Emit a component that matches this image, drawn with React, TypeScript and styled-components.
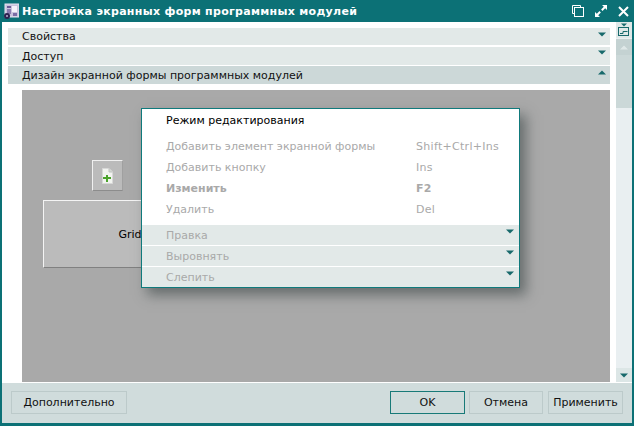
import React from 'react';
import styled, { createGlobalStyle } from 'styled-components';

const GlobalStyle = createGlobalStyle`
  html, body {
    margin: 0;
    padding: 0;
    background: #ffffff;
  }
  body {
    font-family: "DejaVu Sans", Verdana, sans-serif;
    font-size: 11px;
  }
`;

const Dialog = styled.div`
  width: 634px;
  height: 426px;
  box-sizing: border-box;
  display: flex;
  flex-direction: column;
  overflow: hidden;
  background: #ffffff;
  border-left: 2px solid #0c7176;
  border-right: 2px solid #0c7176;
  border-bottom: 3px solid #0c7176;
`;

const TitleBar = styled.div`
  height: 22px;
  flex: none;
  margin: 0 -2px;
  padding: 0 4px 0 3px;
  display: flex;
  align-items: center;
  background: #0c7176;
  color: #ffffff;
`;

const TitleText = styled.div`
  flex: 1;
  margin-left: 3px;
  font-weight: bold;
  font-size: 11px;
  letter-spacing: 0.3px;
  white-space: nowrap;
`;

const WindowIcons = styled.div`
  display: flex;
  align-items: center;
  gap: 11px;
  margin-right: 1px;
`;

const Main = styled.div`
  flex: 1;
  min-height: 0;
  display: flex;
`;

const Content = styled.div`
  flex: 1;
  min-width: 0;
  display: flex;
  flex-direction: column;
  padding: 6px 0 0 6px;
`;

const SectionRow = styled.div<{ $open?: boolean; $height: number; $gap: number }>`
  height: ${(p) => p.$height}px;
  flex: none;
  margin-bottom: ${(p) => p.$gap}px;
  padding: 0 4px 0 14px;
  display: flex;
  align-items: center;
  justify-content: space-between;
  background: ${(p) => (p.$open ? '#ccd8d8' : '#e2e9e8')};
  color: #111111;
`;

const Canvas = styled.div`
  position: relative;
  flex: 1;
  margin: 6px 0 0 14px;
  background: #a9a9a9;
  display: flex;
  flex-direction: column;
  align-items: flex-start;
  padding: 70px 0 0 21px;
`;

const AddButton = styled.div`
  width: 29px;
  height: 29px;
  margin-left: 49px;
  display: flex;
  align-items: center;
  justify-content: center;
  background: #bbbbbb;
  border-top: 1px solid #f0f0f0;
  border-left: 1px solid #f0f0f0;
  border-bottom: 1px solid #8c8c8c;
  border-right: 1px solid #a0a0a0;
`;

const GridBox = styled.div`
  width: 172px;
  height: 66px;
  margin-top: 9px;
  display: flex;
  align-items: center;
  justify-content: center;
  background: #bbbbbb;
  border-top: 1px solid #f4f4f4;
  border-left: 1px solid #f4f4f4;
  border-bottom: 1px solid #808080;
  color: #000000;
`;

const Popup = styled.div`
  position: absolute;
  left: 119px;
  top: 18px;
  width: 377px;
  height: 178px;
  display: flex;
  flex-direction: column;
  background: #ffffff;
  border: 1px solid #0f7a7c;
  box-shadow: 6px 7px 12px rgba(50, 60, 60, 0.55);
`;

const ModeItem = styled.div`
  height: 16px;
  margin-top: 3px;
  padding-left: 24px;
  display: flex;
  align-items: center;
  color: #000000;
`;

const MenuList = styled.div`
  flex: 1;
  display: flex;
  flex-direction: column;
  padding-top: 8px;
`;

const MenuItem = styled.div<{ $bold?: boolean }>`
  height: 21px;
  flex: none;
  padding-left: 24px;
  display: grid;
  grid-template-columns: 250px 1fr;
  align-items: center;
  color: #a9a9a9;
  font-weight: ${(p) => (p.$bold ? 'bold' : 'normal')};
`;

const Shortcut = styled.span`
  letter-spacing: 0.3px;
`;

const PopupSection = styled.div`
  height: 20px;
  flex: none;
  margin-top: 1px;
  padding: 0 5px 0 24px;
  display: flex;
  align-items: center;
  justify-content: space-between;
  background: #e2e9e8;
  color: #a9a9a9;
`;

const ArrowBox = styled.span<{ $lift: number }>`
  display: flex;
  margin-bottom: ${(p) => p.$lift}px;
`;

const Scrollbar = styled.div`
  width: 16px;
  flex: none;
  margin-left: 6px;
  display: flex;
  flex-direction: column;
  background: #e9eff1;
`;

const ScrollTop = styled.div`
  height: 16px;
  margin-bottom: 1px;
  display: flex;
  align-items: center;
  justify-content: center;
  background: #dfe8e8;
`;

const ScrollUp = styled.div`
  height: 16px;
  display: flex;
  align-items: center;
  justify-content: center;
  background: #c4d2d2;
`;

const ScrollThumb = styled.div`
  height: 53px;
  background: #cbd8d8;
`;

const ScrollTrack = styled.div`
  flex: 1;
`;

const ScrollDown = styled.div`
  height: 14px;
  display: flex;
  align-items: center;
  justify-content: center;
  background: #dce6e6;
`;

const Footer = styled.div`
  height: 41px;
  flex: none;
  box-sizing: border-box;
  border-top: 1px solid #ffffff;
  padding: 8px 9px 0 9px;
  display: flex;
  align-items: flex-start;
  background: #d0dcdc;
`;

const FooterButton = styled.div<{ $primary?: boolean; $width: number; $left?: number }>`
  width: ${(p) => p.$width}px;
  height: 23px;
  box-sizing: border-box;
  margin-left: ${(p) => p.$left ?? 0}px;
  display: flex;
  align-items: center;
  justify-content: center;
  border: 1px solid ${(p) => (p.$primary ? '#187a78' : '#bccaca')};
  color: #111111;
`;

const Spacer = styled.div`
  flex: 1;
`;

const Arrow = ({ up, color = '#17696b', lift = 0 }: { up?: boolean; color?: string; lift?: number }) => (
  <ArrowBox $lift={lift}>
    <svg width="8" height="5" viewBox="0 0 8 5">
      <path d={up ? 'M4 0.5 L8 4.5 H0 Z' : 'M0 0.5 H8 L4 4.5 Z'} fill={color} />
    </svg>
  </ArrowBox>
);

const AppIcon = () => (
  <svg width="16" height="17" viewBox="0 0 16 17">
    <rect x="2" y="1" width="14" height="13" fill="#c9c3dc" stroke="#e8e4f2" />
    <rect x="4" y="3" width="4" height="2" fill="#6a5a94" />
    <rect x="9" y="3" width="5" height="6" fill="#f4f2fa" />
    <rect x="4" y="6" width="4" height="5" fill="#8a7cb0" />
    <rect x="10" y="10" width="4" height="3" fill="#7a6ca4" />
    <circle cx="4" cy="13" r="3" fill="#2d2350" />
    <circle cx="4" cy="13" r="1" fill="#b8b0d0" />
  </svg>
);

const RestoreIcon = () => (
  <svg width="12" height="12" viewBox="0 0 12 12" fill="none" stroke="#ffffff">
    <path d="M8.5 2.5 V0.5 H0.5 V8.5 H2.5" strokeWidth="1" />
    <rect x="2.5" y="2.5" width="9" height="9" strokeWidth="1" />
  </svg>
);

const MaximizeIcon = () => (
  <svg width="12" height="12" viewBox="0 0 12 12">
    <path d="M7 0 H12 V5 L10.2 3.2 L7.5 5.9 L6.1 4.5 L8.8 1.8 Z" fill="#ffffff" />
    <path d="M5 12 H0 V7 L1.8 8.8 L4.5 6.1 L5.9 7.5 L3.2 10.2 Z" fill="#ffffff" />
  </svg>
);

const CloseIcon = () => (
  <svg width="11" height="11" viewBox="0 0 11 11">
    <path d="M1 1 L10 10 M10 1 L1 10" stroke="#ffffff" strokeWidth="2" />
  </svg>
);

const ChartIcon = () => (
  <svg width="12" height="14" viewBox="0 0 12 14">
    <path d="M3 0.5 H9 L6 3.5 Z" fill="#17696b" />
    <rect x="0.5" y="4.5" width="10" height="8" fill="none" stroke="#17696b" />
    <path d="M2 10.5 H5 V8.5 H9.5" fill="none" stroke="#17696b" />
  </svg>
);

const AddDocIcon = () => (
  <svg width="11" height="16" viewBox="0 0 11 16">
    <path d="M0.5 0.5 H7 L10.5 4 V15.5 H0.5 Z" fill="#f2f4f0" stroke="#d8d8d8" />
    <path d="M7 0.5 V4 H10.5" fill="#d0d8d0" stroke="#c0c0c0" />
    <path d="M4 7 H6 V9 H9 V11 H6 V14 H4 V11 H1 V9 H4 Z" fill="#4ba32c" />
  </svg>
);

const App = () => (
  <>
    <GlobalStyle />
    <Dialog>
      <TitleBar>
        <AppIcon />
        <TitleText>Настройка экранных форм программных модулей</TitleText>
        <WindowIcons>
          <RestoreIcon />
          <MaximizeIcon />
          <CloseIcon />
        </WindowIcons>
      </TitleBar>
      <Main>
        <Content>
          <SectionRow $height={17} $gap={2}>
            Свойства
            <Arrow lift={5} />
          </SectionRow>
          <SectionRow $height={18} $gap={1}>
            Доступ
            <Arrow lift={7} />
          </SectionRow>
          <SectionRow $open $height={18} $gap={0}>
            Дизайн экранной формы программных модулей
            <Arrow up lift={5} />
          </SectionRow>
          <Canvas>
            <AddButton>
              <AddDocIcon />
            </AddButton>
            <GridBox>Grid</GridBox>
            <Popup>
              <ModeItem>Режим редактирования</ModeItem>
              <MenuList>
                <MenuItem>
                  <span>Добавить элемент экранной формы</span>
                  <Shortcut>Shift+Ctrl+Ins</Shortcut>
                </MenuItem>
                <MenuItem>
                  <span>Добавить кнопку</span>
                  <Shortcut>Ins</Shortcut>
                </MenuItem>
                <MenuItem $bold>
                  <span>Изменить</span>
                  <Shortcut>F2</Shortcut>
                </MenuItem>
                <MenuItem>
                  <span>Удалить</span>
                  <Shortcut>Del</Shortcut>
                </MenuItem>
              </MenuList>
              <PopupSection>
                Правка
                <Arrow lift={8} />
              </PopupSection>
              <PopupSection>
                Выровнять
                <Arrow lift={8} />
              </PopupSection>
              <PopupSection>
                Слепить
                <Arrow lift={8} />
              </PopupSection>
            </Popup>
          </Canvas>
        </Content>
        <Scrollbar>
          <ScrollTop>
            <ChartIcon />
          </ScrollTop>
          <ScrollUp>
            <Arrow up color="#dfe8e8" />
          </ScrollUp>
          <ScrollThumb />
          <ScrollTrack />
          <ScrollDown>
            <Arrow />
          </ScrollDown>
        </Scrollbar>
      </Main>
      <Footer>
        <FooterButton $width={116}>Дополнительно</FooterButton>
        <Spacer />
        <FooterButton $primary $width={75}>OK</FooterButton>
        <FooterButton $width={74} $left={4}>Отмена</FooterButton>
        <FooterButton $width={75} $left={5}>Применить</FooterButton>
      </Footer>
    </Dialog>
  </>
);

export default App;
